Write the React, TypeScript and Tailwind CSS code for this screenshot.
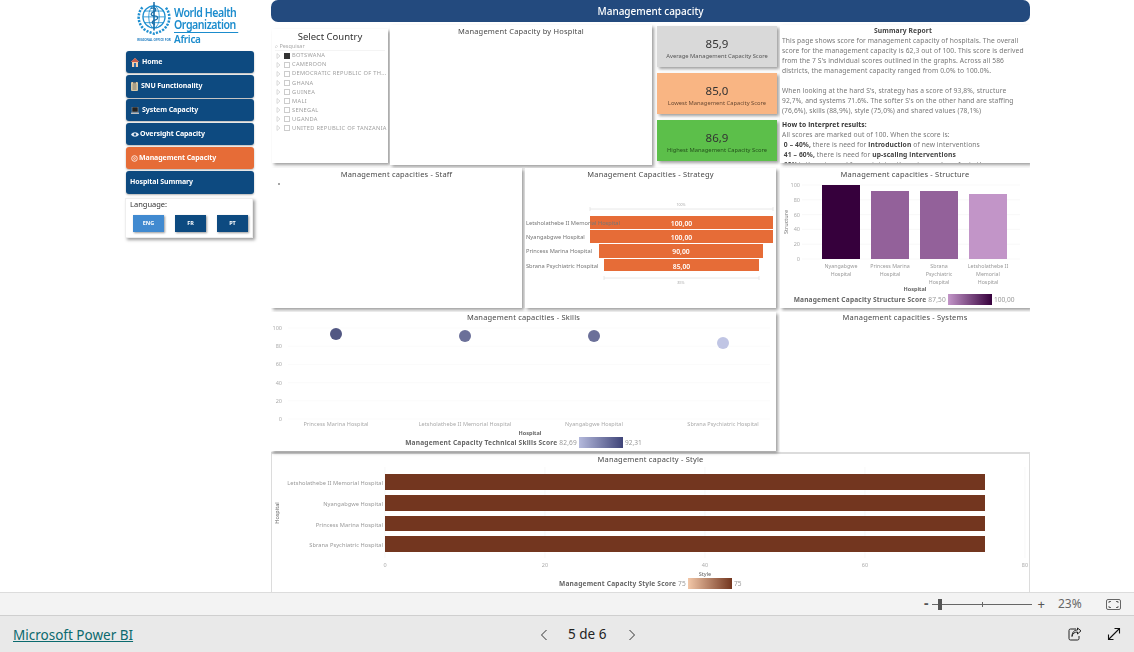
import React from "react";

const navy = "bg-[#0d4a80]";
const panelShadow = "shadow-[2px_2px_3px_rgba(0,0,0,0.38)]";

function WhoLogo() {
  return (
    <svg width="38" height="35" viewBox="0 0 36 33" fill="none" stroke="#1f8fd0">
      <circle cx="18" cy="14" r="10.5" strokeWidth="1.2" />
      <ellipse cx="18" cy="14" rx="5" ry="10.5" strokeWidth="0.8" />
      <path d="M7.5 14h21M9 8.5h18M9 19.5h18M18 2v24" strokeWidth="0.8" />
      <path d="M18 0v27" stroke="#1b6fa8" strokeWidth="1.4" />
      <path d="M15 6c5-2 6 2 3 3s-4 4 0 4 5 3 1 4-3 4 0 4" stroke="#1b6fa8" strokeWidth="1.2" />
      <path d="M7 5C2 11 2 20 9 26c3 2 6 3 9 4 3-1 6-2 9-4 7-6 7-15 2-21" strokeWidth="2.4" strokeDasharray="2 1.2" />
    </svg>
  );
}

function NavIcon({ kind }: { kind: string }) {
  if (kind === "home")
    return (
      <svg width="8" height="9" viewBox="0 0 8 9">
        <path d="M4 0 8 4H7v5H1V4H0z" fill="#f2c9a8" />
        <path d="M3 5h2v4H3z" fill="#2c6fb0" />
        <path d="M4 0 8 4H0z" fill="#c95b4a" />
      </svg>
    );
  if (kind === "clip")
    return (
      <svg width="7" height="9" viewBox="0 0 7 9">
        <rect width="7" height="9" rx="1" fill="#d9c9a5" />
        <path d="M1.500 3h4M1.500 5h4M1.500 7h4" stroke="#555" strokeWidth="0.7" />
        <rect x="2" width="3" height="1.500" fill="#666" />
      </svg>
    );
  if (kind === "laptop")
    return (
      <svg width="8" height="7" viewBox="0 0 8 7">
        <rect x="1" width="6" height="5" fill="#222" stroke="#aaa" strokeWidth="0.5" />
        <rect y="5.500" width="8" height="1.500" fill="#bbb" />
      </svg>
    );
  if (kind === "eye")
    return (
      <svg width="8" height="5" viewBox="0 0 8 5">
        <path d="M0 2.500C2-.5 6-.5 8 2.500 6 5.500 2 5.500 0 2.500Z" fill="#e8eef5" />
        <circle cx="4" cy="2.500" r="1.200" fill="#0d4a80" />
      </svg>
    );
  return (
    <svg width="7" height="7" viewBox="0 0 7 7" fill="none" stroke="#fbe6db">
      <circle cx="3.500" cy="3.500" r="2.800" strokeWidth="1" />
      <circle cx="3.500" cy="3.500" r="0.900" strokeWidth="0.8" />
    </svg>
  );
}

function NavButton({ label, icon, h, active, mt, gap }: { label: string; icon?: string; h: string; active?: boolean; mt: string; gap?: string }) {
  return (
    <div
      className={`${h} ${mt} ${gap ?? "gap-[2px]"} ml-px w-[128px] rounded-[3px] flex items-center pl-[4px] text-[7px] font-bold text-white tracking-[-0.08px] ${
        active ? "bg-[#e66c37]" : navy
      } shadow-[0_1px_2px_rgba(0,0,0,0.3)]`}
    >
      {icon && <span className="flex justify-center pl-[1px]"><NavIcon kind={icon} /></span>}
      <span>{label}</span>
    </div>
  );
}

function Sidebar() {
  return (
    <div className="w-[130px] ml-[125px] mr-[16px] shrink-0">
      <div className="h-[49px] flex pl-[10px] pt-[2px]">
        <div className="flex flex-col items-center w-[38px]">
          <WhoLogo />
          <div className="text-[3px] font-bold text-[#1f7cc0] whitespace-nowrap leading-[6px]">REGIONAL OFFICE FOR</div>
        </div>
        <div className="pl-[1px] pt-[5px] text-[#1b8ccd] font-semibold">
          <div className="text-[12px] leading-[12px] whitespace-nowrap tracking-[-0.5px] scale-x-[0.88] origin-left">World Health</div>
          <div className="text-[12px] leading-[12px] whitespace-nowrap tracking-[-0.5px] scale-x-[0.88] origin-left border-b border-[#1b8ccd] pb-[1px] w-[73px]">Organization</div>
          <div className="text-[10px] leading-[12px] whitespace-nowrap tracking-[-0.3px]">Africa</div>
        </div>
      </div>
      <NavButton label="Home" icon="home" h="h-[22px]" mt="mt-[2px]" gap="gap-[3px]" />
      <NavButton label="SNU Functionality" icon="clip" h="h-[23px]" mt="mt-[2px]" gap="gap-[3px]" />
      <NavButton label="System Capacity" icon="laptop" h="h-[22px]" mt="mt-[1px]" gap="gap-[3px]" />
      <NavButton label="Oversight Capacity" icon="eye" h="h-[22px]" mt="mt-[2px]" gap="gap-[1px]" />
      <NavButton label="Management Capacity" icon="gear" h="h-[22px]" mt="mt-[2px]" gap="gap-[1px]" active />
      <NavButton label="Hospital Summary" h="h-[23px]" mt="mt-[2px]" />
      <div className={`mt-[4px] h-[40px] w-[128px] bg-white ${panelShadow} border border-[#eee] pl-[7px]`}>
        <div className="text-[7.5px] leading-[9px] -ml-[3px] text-[#333] pt-[1px]">Language:</div>
        <div className="flex gap-[11px] mt-[6px]">
          <div className="w-[31px] h-[17px] bg-[#418ad0] text-white text-[5.5px] font-bold flex items-center justify-center shadow-[1px_1px_2px_rgba(0,0,0,0.4)]">ENG</div>
          <div className={`w-[31px] h-[17px] ${navy} text-white text-[5.5px] font-bold flex items-center justify-center shadow-[1px_1px_2px_rgba(0,0,0,0.4)]`}>FR</div>
          <div className={`w-[31px] h-[17px] ${navy} text-white text-[5.5px] font-bold flex items-center justify-center shadow-[1px_1px_2px_rgba(0,0,0,0.4)]`}>PT</div>
        </div>
      </div>
    </div>
  );
}

const countries = ["BOTSWANA", "CAMEROON", "DEMOCRATIC REPUBLIC OF TH...", "GHANA", "GUINEA", "MALI", "SENEGAL", "UGANDA", "UNITED REPUBLIC OF TANZANIA"];

function Slicer() {
  return (
    <div className={`w-[116px] h-[134px] mt-[3px] ml-px bg-white ${panelShadow} overflow-hidden`}>
      <div className="text-center text-[9.5px] leading-[13px] text-[#333] pt-[1px] h-[14px]">Select Country</div>
      <div className="ml-[3px] mr-[3px] text-[5.5px] leading-[7px] text-[#aaa] border-b border-[#f4f4f4]">⌕ Pesquisar</div>
      <div className="pl-[4px]">
        {countries.map((c, i) => (
          <div key={c} className="flex items-center h-[9.1px] whitespace-nowrap">
            <svg width="5" height="6" viewBox="0 0 5 6" className="mr-[3px]"><path d="M1 .5 4 3 1 5.500Z" fill="none" stroke="#ccc" strokeWidth="0.7" /></svg>
            <span className={`w-[6px] h-[6px] mr-[2px] border ${i === 0 ? "bg-[#333] border-[#333]" : "border-[#ccc]"}`} />
            <span className="text-[5.7px] text-[#a0a0a0] tracking-[0.3px]">{c}</span>
          </div>
        ))}
      </div>
    </div>
  );
}

function Title({ children }: { children: React.ReactNode }) {
  return <div className="text-center text-[7.5px] leading-[10px] text-[#4a4a4a] tracking-[0.18px] whitespace-nowrap">{children}</div>;
}

function Card({ value, label, bg, text, mt }: { value: string; label: string; bg: string; text: string; mt: string }) {
  return (
    <div className={`w-[120px] h-[41px] ${mt} ${bg} ${panelShadow} flex flex-col items-center pt-[10px]`}>
      <div className="text-[11.5px] leading-[15px] text-[#333]">{value}</div>
      <div className={`text-[5.8px] leading-[8px] mt-[1px] whitespace-nowrap ${text}`}>{label}</div>
    </div>
  );
}

function Summary() {
  const lines1 = [
    "This page shows score for management capacity of hospitals. The overall",
    "score for the management capacity is 62,3 out of 100. This score is derived",
    "from the 7 S's individual scores outlined in the graphs. Across all 586",
    "districts, the management capacity ranged from 0.0% to 100.0%.",
  ];
  const lines2 = [
    "When looking at the hard S's, strategy has a score of 93,8%, structure",
    "92,7%, and systems 71.6%. The softer S's on the other hand are staffing",
    "(76,6%), skills (88,9%), style (75,0%) and shared values (78,1%)",
  ];
  return (
    <div className={`w-[250px] h-[138px] ml-[3px] -mt-px bg-white ${panelShadow} overflow-hidden pl-[2px] pt-px text-[6.7px] leading-[10px] text-[#777] whitespace-nowrap tracking-[0.11px]`}>
      <div className="text-center font-bold text-[#444] pr-[6px]">Summary Report</div>
      {lines1.map((l) => <div key={l}>{l}</div>)}
      <div className="h-[10px]" />
      {lines2.map((l) => <div key={l}>{l}</div>)}
      <div className="font-bold text-[#333] mt-[4px]">How to interpret results:</div>
      <div>All scores are marked out of 100. When the score is:</div>
      <div>&nbsp;<b className="text-[#444]">0 – 40%,</b> there is need for <b className="text-[#444]">introduction</b> of new interventions</div>
      <div>&nbsp;<b className="text-[#444]">41 – 60%,</b> there is need for <b className="text-[#444]">up-scaling interventions</b></div>
      <div>&nbsp;<b className="text-[#444]">60%+,</b> there is need for sustaining the gains made so far in these areas</div>
    </div>
  );
}

const tick = { fontSize: 5.5, fill: "#aaa" };
const axisTitle = { fontSize: 5.5, fill: "#666", fontWeight: 700 };

function GradientLegend({ name, lo, hi, from, to, x, y, id, textEnd, w = 44 }: { name: string; lo: string; hi: string; from: string; to: string; x: number; y: number; id: string; textEnd: number; w?: number }) {
  return (
    <g>
      <defs>
        <linearGradient id={id}><stop offset="0" stopColor={from} /><stop offset="1" stopColor={to} /></linearGradient>
      </defs>
      <text x={textEnd} y={y + 8} textAnchor="end" style={{ fontSize: 6.6, fill: "#666", fontWeight: 700, letterSpacing: 0.18 }}>{name} <tspan style={{ fill: "#999", fontWeight: 400 }}>{lo}</tspan></text>
      <rect x={x} y={y} width={w} height={11} fill={`url(#${id})`} />
      <text x={x + w + 2} y={y + 8} style={{ fontSize: 6.6, fill: "#999" }}>{hi}</text>
    </g>
  );
}

function Strategy() {
  const rows = [
    { l: "Letsholathebe II Memorial Hospital", y: 216, h: 13, x: 590, w: 183, v: "100,00" },
    { l: "Nyangabgwe Hospital", y: 230, h: 13, x: 590, w: 183, v: "100,00" },
    { l: "Princess Marina Hospital", y: 244, h: 14, x: 599, w: 164, v: "90,00" },
    { l: "Sbrana Psychiatric Hospital", y: 259, h: 12, x: 604, w: 155, v: "85,00" },
  ];
  return (
    <svg width="251" height="129" viewBox="525 179 251 129" className="block">
      <path d="M590 207v4M590 209H773M773 207v4M604 276v4M604 278H759M759 276v4" stroke="#e2e2e2" strokeWidth="0.8" fill="none" />
      <text x="681" y="206" textAnchor="middle" style={{ fontSize: 3.500, fill: "#aaa" }}>100%</text>
      <text x="681" y="284" textAnchor="middle" style={{ fontSize: 3.500, fill: "#aaa" }}>85%</text>
      {rows.map((r) => (
        <g key={r.l}>
          <rect x={r.x} y={r.y} width={r.w} height={r.h} fill="#e66c37" />
          <text x="526" y={r.y + 8.500} style={{ fontSize: 5.700, fill: "#777" }}>{r.l}</text>
          <text x={r.x + r.w / 2} y={r.y + 9.500} textAnchor="middle" style={{ fontSize: 6.800, fill: "#fff", fontWeight: 600 }}>{r.v}</text>
        </g>
      ))}
    </svg>
  );
}

function Structure() {
  const bars = [
    { x: 822, y: 185, c: "#36003c", l: ["Nyangabgwe", "Hospital"] },
    { x: 871, y: 191, c: "#93619a", l: ["Princess Marina", "Hospital"] },
    { x: 920, y: 191, c: "#93619a", l: ["Sbrana", "Psychiatric", "Hospital"] },
    { x: 969, y: 194, c: "#c295c8", l: ["Letsholathebe II", "Memorial", "Hospital"] },
  ];
  const ys = [100, 80, 60, 40, 20, 0];
  return (
    <svg width="250" height="129" viewBox="780 179 250 129" className="block">
      {ys.map((v, i) => (
        <g key={v}>
          <line x1="802" x2="1020" y1={185 + i * 14.8} y2={185 + i * 14.8} stroke="#f6f6f6" strokeWidth="0.7" />
          <text x="800" y={187 + i * 14.8} textAnchor="end" style={tick}>{v}</text>
        </g>
      ))}
      <text transform="translate(788 222) rotate(-90)" textAnchor="middle" style={{ fontSize: 5.500, fill: "#777" }}>Structure</text>
      {bars.map((b) => (
        <g key={b.x}>
          <rect x={b.x} y={b.y} width="38" height={259 - b.y} fill={b.c} />
          {b.l.map((t, i) => (
            <text key={t} x={b.x + 19} y={268 + i * 8} textAnchor="middle" style={{ fontSize: 5.300, fill: "#999" }}>{t}</text>
          ))}
        </g>
      ))}
      <text x="915" y="291" textAnchor="middle" style={axisTitle}>Hospital</text>
      <GradientLegend id="g1" name="Management Capacity Structure Score" lo="87,50" hi="100,00" from="#c295c8" to="#36003c" x={948} y={294} textEnd={946} />
    </svg>
  );
}

function Skills() {
  const pts = [
    { x: 336, y: 334, c: "#525783", l: "Princess Marina Hospital" },
    { x: 465, y: 336, c: "#6b7099", l: "Letsholathebe II Memorial Hospital" },
    { x: 594, y: 336, c: "#6b7099", l: "Nyangabgwe Hospital" },
    { x: 723, y: 343, c: "#c0c5e4", l: "Sbrana Psychiatric Hospital" },
  ];
  const ys = [100, 80, 60, 40, 20, 0];
  return (
    <svg width="505" height="129" viewBox="271 322 505 129" className="block">
      {ys.map((v, i) => (
        <g key={v}>
          <line x1="288" x2="770" y1={328 + i * 18.2} y2={328 + i * 18.2} stroke="#f9f9f9" strokeWidth="0.7" />
          <text x="282" y={330 + i * 18.2} textAnchor="end" style={tick}>{v}</text>
        </g>
      ))}
      {pts.map((p) => (
        <g key={p.x}>
          <circle cx={p.x} cy={p.y} r="6" fill={p.c} />
          <text x={p.x} y="426" textAnchor="middle" style={{ fontSize: 5.500, fill: "#aaa", letterSpacing: 0.05 }}>{p.l}</text>
        </g>
      ))}
      <text x="530" y="435" textAnchor="middle" style={axisTitle}>Hospital</text>
      <GradientLegend id="g2" name="Management Capacity Technical Skills Score" lo="82,69" hi="92,31" from="#b4b9dc" to="#3f4478" x={579} y={437} textEnd={577} />
    </svg>
  );
}

function Style() {
  const rows = [
    { y: 474, h: 16, l: "Letsholathebe II Memorial Hospital" },
    { y: 495, h: 16, l: "Nyangabgwe Hospital" },
    { y: 516, h: 15, l: "Princess Marina Hospital" },
    { y: 536, h: 16, l: "Sbrana Psychiatric Hospital" },
  ];
  const xs = [0, 20, 40, 60, 80];
  return (
    <svg width="757" height="129" viewBox="272 464 757 129" className="block">
      {xs.map((v, i) => (
        <g key={v}>
          <line x1={385 + i * 160} x2={385 + i * 160} y1="467" y2="558" stroke="#f5f5f5" strokeWidth="0.7" />
          <text x={385 + i * 160} y="567" textAnchor="middle" style={tick}>{v}</text>
        </g>
      ))}
      {rows.map((r) => (
        <g key={r.y}>
          <rect x="385" y={r.y} width="600" height={r.h} fill="#73361f" />
          <text x="383" y={r.y + 10.500} textAnchor="end" style={{ fontSize: 5.700, fill: "#999", letterSpacing: 0.05 }}>{r.l}</text>
        </g>
      ))}
      <text transform="translate(279 513) rotate(-90)" textAnchor="middle" style={{ fontSize: 5.500, fill: "#666" }}>Hospital</text>
      <text x="705" y="576" textAnchor="middle" style={{ fontSize: 5.500, fill: "#666" }}>Style</text>
      <GradientLegend id="g3" name="Management Capacity Style Score" lo="75" hi="75" from="#f2c7a8" to="#73361f" x={688} y={578} textEnd={686} />
    </svg>
  );
}

function Canvas() {
  return (
    <div className="w-[759px] shrink-0 h-[592px] overflow-hidden">
      <div className="h-[22px] bg-[#234a7e] rounded-[7px] flex items-center justify-center text-white text-[10px] font-medium">Management capacity</div>

      <div className="flex h-[143px] pt-[3px] mt-[1px]">
        <Slicer />
        <div className={`w-[262px] h-[140px] -mt-px ml-[2px] bg-white ${panelShadow} pt-px`}>
          <Title>Management Capacity by Hospital</Title>
        </div>
        <div className="ml-[5px] flex flex-col">
          <Card value="85,9" label="Average Management Capacity Score" bg="bg-[#d9d9d9]" text="text-[#555]" mt="mt-0" />
          <Card value="85,0" label="Lowest Management Capacity Score" bg="bg-[#f9b583]" text="text-[#6b4a33]" mt="mt-[6px]" />
          <Card value="86,9" label="Highest Management Capacity Score" bg="bg-[#5cbf4a]" text="text-[#24521c]" mt="mt-[6px]" />
        </div>
        <Summary />
      </div>

      <div className="flex h-[140px] mt-[2px]">
        <div className={`w-[251px] h-[140px] bg-white ${panelShadow} pt-[1px]`}>
          <Title>Management capacities - Staff</Title>
          <div className="ml-[7px] mt-[4px] w-[2px] h-[2px] rounded-full bg-[#888]" />
        </div>
        <div className={`w-[251px] h-[140px] ml-[3px] bg-white ${panelShadow} pt-[1px]`}>
          <Title>Management Capacities - Strategy</Title>
          <Strategy />
        </div>
        <div className={`w-[250px] h-[140px] ml-[4px] bg-white ${panelShadow} pt-[1px]`}>
          <Title>Management capacities - Structure</Title>
          <Structure />
        </div>
      </div>

      <div className="flex h-[139px] mt-[4px]">
        <div className={`w-[505px] h-[139px] bg-white ${panelShadow}`}>
          <Title>Management capacities - Skills</Title>
          <Skills />
        </div>
        <div className="w-[250px] h-[139px] ml-[4px] bg-white">
          <Title>Management capacities - Systems</Title>
        </div>
      </div>

      <div className="h-[140px] mt-px bg-white border-t-2 border-[#dcdcdc] border-l border-r">
        <Title>Management capacity - Style</Title>
        <Style />
      </div>
    </div>
  );
}

function Footer() {
  return (
    <div>
      <div className="h-[23px] bg-[#f3f3f3] border-t border-[#dcdcdc] flex items-center justify-end">
        <span className="text-[14px] font-bold text-[#555] leading-none mr-[3px] -mt-[2px]">-</span>
        <div className="relative w-[100px] h-[1px] bg-[#666]">
          <div className="absolute left-[6px] -top-[5px] w-[4px] h-[11px] bg-[#555]" />
          <div className="absolute left-[50px] -top-[2px] w-px h-[5px] bg-[#666]" />
        </div>
        <span className="text-[13px] text-[#555] ml-[6px] leading-none">+</span>
        <span className="text-[12px] text-[#666] ml-[13px] w-[31px] leading-none">23%</span>
        <svg width="15" height="11" viewBox="0 0 15 11" fill="none" stroke="#666" className="ml-[17px] mr-[13px]">
          <rect x="0.500" y="0.500" width="14" height="10" rx="1.500" />
          <path d="M3 4V2.500h2M12 4V2.500h-2M3 7v1.500h2M12 7v1.500h-2" />
        </svg>
      </div>
      <div className="h-[37px] bg-[#e9e9e9] border-t border-[#cfcfcf] flex items-center relative">
        <a className="ml-[13px] mt-[3px] text-[13.500px] text-[#0b6a6e] underline whitespace-nowrap">Microsoft Power BI</a>
        <div className="absolute left-[539px] top-[12px] flex items-center">
          <svg width="10" height="12" viewBox="0 0 10 12" fill="none" stroke="#333"><path d="M7.500 1 2.500 6l5 5" /></svg>
          <span className="text-[13.500px] text-[#222] ml-[19px] w-[40px] whitespace-nowrap leading-none">5 de 6</span>
          <svg width="10" height="12" viewBox="0 0 10 12" fill="none" stroke="#333" className="ml-[19px]"><path d="M2.500 1l5 5-5 5" /></svg>
        </div>
        <div className="ml-auto flex items-center mr-[13px]">
          <svg width="14" height="14" viewBox="0 0 14 14" fill="none" stroke="#222" strokeWidth="1">
            <path d="M8 2H2.500A1.500 1.500 0 0 0 1 3.500v8A1.500 1.500 0 0 0 2.500 13h7a1.500 1.500 0 0 0 1.500-1.500V9" />
            <path d="M4 9.500c.5-3 2.500-4.500 5.500-4.500V7L13 3.800 9.500 1v2C6 3 4 5.500 4 9.500Z" />
          </svg>
          <svg width="14" height="14" viewBox="0 0 14 14" fill="none" stroke="#111" strokeWidth="1.100" className="ml-[25px]">
            <path d="M1.500 12.500 12.500 1.500M7.500 1.500h5v5M1.500 7.500v5h5" />
          </svg>
        </div>
      </div>
    </div>
  );
}

export default function App() {
  return (
    <div className="w-[1134px] h-[652px] overflow-hidden bg-white font-['Noto_Sans','Open_Sans',sans-serif]">
      <div className="flex h-[592px] bg-white blur-[0.4px]">
        <Sidebar />
        <Canvas />
      </div>
      <Footer />
    </div>
  );
}
